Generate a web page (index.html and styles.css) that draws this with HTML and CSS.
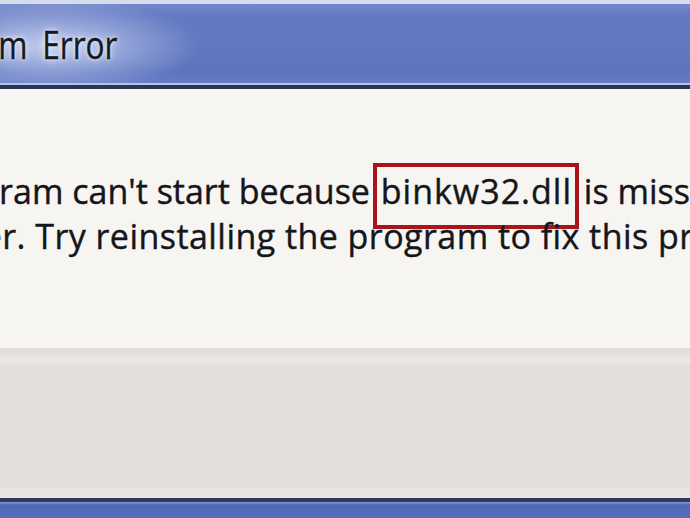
FILE: index.html
```html
<!DOCTYPE html>
<html lang="en">
<head>
<meta charset="utf-8">
<title>System Error</title>
<link rel="stylesheet" href="styles.css">
</head>
<body>
<div class="window">
  <div class="titlebar">
    <span class="title">System Error</span>
  </div>
  <div class="content">
    <p class="message">
      <span class="line">The program can't start because <span class="hl">binkw32.dll</span> is missing from your</span>
      <span class="line line-2">computer. Try reinstalling the program to fix this problem.</span>
    </p>
  </div>
  <div class="footer"></div>
  <div class="frame-bottom"></div>
</div>
</body>
</html>
```
FILE: styles.css
```css
html, body {
  margin: 0;
  padding: 0;
  width: 690px;
  height: 518px;
  overflow: hidden;
  background: #f7f5f2;
}
.window {
  display: flex;
  flex-direction: column;
  width: 690px;
  height: 518px;
  overflow: hidden;
}
.titlebar {
  height: 81px;
  flex: none;
  border-top: 4px solid #d6dcec;
  border-bottom: 4px solid #2c3550;
  box-shadow: inset 0 -2px 0 #b7c3e4;
  background:
    radial-gradient(ellipse 150px 48px at 50px 42px, rgba(215,224,248,0.8), rgba(215,224,248,0) 100%),
    linear-gradient(#7387cc 0%, #6479c3 15%, #6178c0 60%, #5d74bf 85%, #6a80c6 100%);
  display: flex;
  align-items: center;
  overflow: hidden;
}
.title {
  font-family: "Open Sans", "Noto Sans", sans-serif;
  font-size: 39px;
  color: #15181e;
  white-space: nowrap;
  margin-left: -125px;
  margin-top: -2px;
  word-spacing: 8px;
  transform: scaleX(0.81);
  transform-origin: 100% 50%;
  -webkit-text-stroke: 0.4px #15181e;
  text-shadow: 0 0 10px rgba(255,255,255,0.9), 0 0 4px rgba(255,255,255,0.8);
}
.content {
  flex: none;
  height: 259px;
  background: #f7f5f2;
  overflow: hidden;
}
.message {
  margin: 0;
  padding-top: 80px;
  margin-left: -142px;
  font-family: "Open Sans", "Noto Sans", sans-serif;
  font-size: 34px;
  line-height: 45px;
  color: #15161a;
  -webkit-text-stroke: 0.4px #15161a;
  white-space: nowrap;
}
.line {
  display: block;
}
.line-2 {
  letter-spacing: 0.45px;
}
.hl {
  border: 4px solid #a8141a;
  padding: 1px 3px 11px 4px;
  margin-left: -6px;
  margin-right: -4px;
  letter-spacing: 1px;
}
.footer {
  flex: none;
  height: 150px;
  background: linear-gradient(#e0ddd9 0px, #e4e1dd 6px, #ebe9e5 12px, #e3e0dc 18px, #e3e0dc 138px, #ebe8e3 142px, #e9e4ec 148px, #ece9f0 150px);
}
.frame-bottom {
  flex: 1;
  border-top: 4px solid #2e3a58;
  background: linear-gradient(#8a9bd2 0px, #5069b8 3px, #556dbc 100%);
}
```
